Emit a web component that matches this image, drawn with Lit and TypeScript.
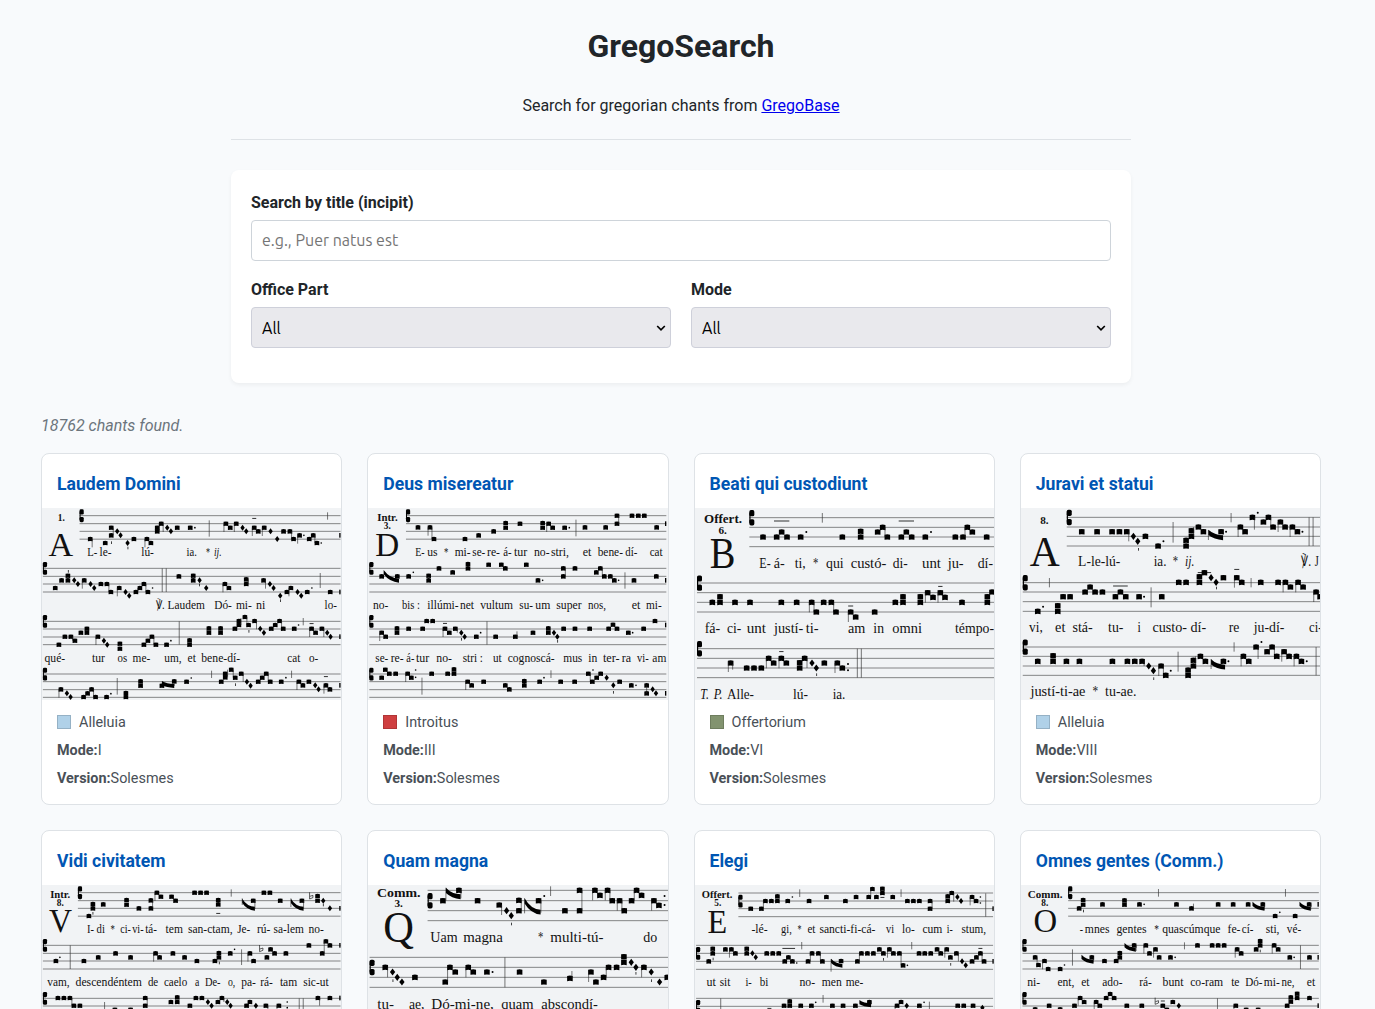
import { LitElement, html, svg, css } from "lit";
import { customElement, property } from "lit/decorators.js";

type Word = [number, number, string, string?];
interface Staff {
  x: number;
  lines: number[];
  clef: number;
  notes: string;
  base: number;
  words: Word[];
}
interface Chant {
  title: string;
  part: string;
  color: string;
  mode: string;
  x0: number;
  k: number;
  label: Word;
  labelY: number;
  num: number;
  numY: number;
  initial: [string, number, number, number, number];
  staves: Staff[];
}

const L1 = [203, 227, 250, 273.5];
const L2 = [361, 385, 408, 432];
const L3 = [520, 543, 567, 590];
const L4 = [678, 701, 725, 748];

/* Score notation. Bare "x,y" is a punctum; l/r add a left/right stem, d diamond,
   s stem, | bar, - episema, . mora, ' ictus, P oblique stroke, c custos, f flat. */
const chants: Chant[] = [
  {
    title: "Laudem Domini", part: "Alleluia", color: "#b0d1e8", mode: "I", x0: 18, k: 1,
    label: [0, 0, ""], labelY: 0, num: 76, numY: 218, initial: ["A", 38, 324, 74, 102],
    staves: [
      { x: 131, lines: L1, clef: 203, base: 325,
        notes: "r163,273 208,285 226,239 226,262 s232,239,262 '227,284 d244,250 d254,262 d275,285 '276,300 294,273 l333,273 345,285 364,250 364,239 s370,227,250 r376,227 d394,239 d405,250 424,239 463,239 .477,239 |520,217,266 l570,227 583,239 l601,227 d620,239 d631,250 l655,239 -655,211,12 667,250 l685,239 d704,250 d724,273 743,250 762,250 s767,250,273 773,273 l791,262 .804,262 820,273 832,262 s837,262,285 843,285 .856,285 |875,193,215 c912,262",
        words: [[154, 184, "L-"], [191, 227, "le-"], [316, 354, "lú-"], [452, 483, "ia."], [510, 522, "*"], [534, 557, "ij.", "i"]] },
      { x: 21, lines: L2, clef: 361, base: 483,
        notes: "58,420 77,397 96,397 96,383 '97,370 d115,397 d126,408 l145,397 d164,408 d175,420 195,408 213,408 s219,408,432 225,432 l250,420 d269,432 d280,443 300,432 s306,430,420 312,420 324,408 s330,408,432 336,432 .350,420 |379,361,432 |391,361,432 429,385 472,397 472,383 d491,397 '491,411 d511,420 l567,408 579,420 631,408 631,394 s637,394,408 r683,397 d702,408 d713,420 d733,443 '734,458 753,432 l765,420 d785,432 d796,443 814,432 .828,420 |853,375,420 883,432 c912,432",
        words: [[360, 386, "℣."], [395, 507, "Laudem"], [535, 588, "Dó-"], [600, 648, "mi-"], [660, 688, "ni"], [866, 903, "lo-"]] },
      { x: 21, lines: L3, clef: 520, base: 641,
        notes: "69,590 87,566 105,566 s110,566,578 117,578 135,554 153,554 153,542 l186,566 d204,578 d214,590 252,602 252,587 324,590 336,578 348,566 s354,566,590 360,590 392,590 .405,578 |430,520,590 461,590 461,577 519,554 519,541 554,554 554,541 597,542 609,531 609,519 s615,510,531 627,507 s633,507,531 638,531 '639,550 r656,519 d673,542 d684,554 706,542 718,531 731,519 s737,519,542 742,542 775,542 .788,531 |802,510,532 l827,542 -827,527,12 839,554 r858,542 d874,554 d884,566 c912,566",
        words: [[26, 88, "qué-"], [168, 207, "tur"], [245, 274, "os"], [290, 343, "me-"], [385, 437, "um,"], [455, 480, "et"], [496, 613, "bene-dí-"], [754, 793, "cat"], [819, 847, "o-"]] },
      { x: 21, lines: L4, clef: 678, base: 800,
        notes: "l75,724 d93,736 d104,747 143,747 155,736 167,724 s173,724,747 179,747 212,747 .225,737 |244,690,740 270,747 270,735 314,713 314,700 P378,706,415,713 378,713 s415,700,714 415,700 452,701 .466,690 |527,668,690 556,701 568,688 568,677 s575,665,688 586,665 s592,665,689 598,689 '599,710 r616,677 d633,701 d644,713 667,701 679,689 691,677 s697,677,701 703,701 736,701 .750,689 |767,668,690 l789,701 801,712 819,701 d838,712 d848,724 l870,712 -870,686,12 882,724 c912,712",
        words: [] },
    ],
  },
  {
    title: "Deus misereatur", part: "Introitus", color: "#cf3f40", mode: "III", x0: 18.75, k: 1,
    label: [47, 108, "Intr."], labelY: 219, num: 77, numY: 242, initial: ["D", 41, 324, 72, 102],
    staves: [
      { x: 133, lines: L1, clef: 203, base: 325,
        notes: "169,238 l205,238 s211,238,273 217,273 310,273 351,262 396,250 432,239 432,225 475,227 543,239 543,225 l561,227 573,239 609,239 .623,239 |643,215,265 670,238 732,238 766,227 766,203 s771,203,227 811,203 830,203 848,203 885,238 c912,227",
        words: [[161, 189, "E-"], [197, 228, "us"], [247, 260, "*"], [279, 327, "mi-"], [332, 371, "se-"], [376, 415, "re-"], [425, 450, "á-"], [457, 497, "tur"], [517, 564, "no-"], [568, 622, "stri,"], [663, 689, "et"], [708, 784, "bene-"], [791, 827, "dí-"], [864, 903, "cat"]] },
      { x: 23, lines: L2, clef: 361, base: 483,
        notes: "60,385 P66,373,112,397 107,385 141,385 .155,373 201,397 201,383 232,361 273,373 319,361 319,348 381,350 419,350 431,361 494,350 529,397 .543,397 605,385 605,361 s611,361,385 640,361 704,373 716,361 s722,361,385 728,385 746,385 758,397 .771,397 |790,373,422 817,397 884,385 c912,397",
        words: [[34, 80, "no-"], [121, 175, "bis :"], [197, 291, "illúmi-"], [295, 337, "net"], [356, 454, "vultum"], [473, 514, "su-"], [521, 566, "um"], [584, 660, "super"], [679, 733, "nos,"], [810, 836, "et"], [853, 900, "mi-"]] },
      { x: 23, lines: L3, clef: 520, base: 641,
        notes: "l60,554 72,566 106,554 106,541 141,542 183,542 195,519 213,519 l250,542 -250,526,12 263,554 281,542 s287,542,554 d299,554 '299,574 d309,566 344,566 .357,554 |376,520,590 402,566 461,566 s466,550,566 514,554 560,554 560,541 d577,554 d587,566 '588,580 606,542 640,542 684,542 741,542 754,530 766,542 800,554 .813,554 846,542 880,519 c912,531",
        words: [[41, 80, "se-"], [87, 126, "re-"], [134, 158, "á-"], [163, 203, "tur"], [224, 271, "no-"], [303, 364, "stri :"], [394, 420, "ut"], [438, 579, "cognoscá-"], [605, 662, "mus"], [680, 707, "in"], [724, 774, "ter-"], [780, 808, "ra"], [826, 861, "vi-"], [872, 914, "am"]] },
      { x: 23, lines: L4, clef: 678, base: 800,
        notes: "60,689 71,665 83,677 102,677 l138,677 149,689 .162,666 .162,688 |181,689,740 210,677 258,677 277,677 277,664 l318,701 330,712 366,701 431,712 443,724 488,712 488,699 534,701 .547,689 |568,667,690 597,701 639,701 r680,677 .694,666 692,701 705,689 717,677 d735,689 d755,712 '755,733 774,701 809,712 .823,712 855,736 855,712 s855,712,736 d873,724 d883,736 c912,736",
        words: [] },
    ],
  },
  {
    title: "Beati qui custodiunt", part: "Offertorium", color: "#82936f", mode: "VI", x0: 19.5, k: 1.2,
    label: [48, 162, "Offert."], labelY: 225, num: 104, numY: 257, initial: ["B", 65, 360, 77, 132],
    staves: [
      { x: 184, lines: [209, 238, 267, 296], clef: 209, base: 359,
        notes: "225,267 266,267 281,252 297,267 -281,219,46 338,267 .355,252 |403,195,224 463,267 518,267 518,250 569,252 584,238 598,267 s591,238,267 640,267 655,252 671,267 -655,219,46 712,267 .729,252 802,267 825,267 838,238 s831,238,267 853,252 896,267",
        words: [[214, 248, "E-"], [257, 290, "á-"], [320, 353, "ti,"], [375, 391, "*"], [414, 467, "qui"], [488, 595, "custó-"], [614, 659, "di-"], [702, 759, "unt"], [779, 827, "ju-"], [869, 915, "dí-"]] },
      { x: 27, lines: [405, 434, 463, 492], clef: 405, base: 556,
        notes: "73,463 96,463 96,446 141,463 186,463 280,463 326,463 l371,463 s378,463,492 385,492 407,463 430,463 s437,463,492 444,492 l488,492 -488,474,15 503,507 560,492 622,463 645,463 645,446 697,463 697,446 l719,434 735,448 l757,434 -757,415,13 771,448 822,463 898,463 898,446 912,432",
        words: [[50, 97, "fá-"], [117, 160, "ci-"], [176, 234, "unt"], [258, 346, "justí-"], [353, 392, "ti-"], [480, 532, "am"], [556, 588, "in"], [613, 702, "omni"], [801, 918, "témpo-"]] },
      { x: 27, lines: [602, 631, 660, 689], clef: 602, base: 752,
        notes: "128,645 s121,640,672 s134,648,665 176,660 198,660 220,660 l242,631 257,645 l280,631 -280,611,13 295,645 335,660 335,644 350,631 s357,631,660 d372,645 d385,660 '386,680 409,645 l448,645 463,660 .480,648 .480,667 |508,602,689 |520,602,689",
        words: [[37, 63, "T.", "i"], [77, 104, "P.", "i"], [117, 198, "Alle-"], [315, 360, "lú-"], [434, 472, "ia."]] },
    ],
  },
  {
    title: "Juravi et statui", part: "Alleluia", color: "#b0d1e8", mode: "VIII", x0: 20.25, k: 1.2,
    label: [0, 0, ""], labelY: 0, num: 92, numY: 227, initial: ["A", 48, 354, 90, 126],
    staves: [
      { x: 159, lines: [208, 237, 265, 294], clef: 208, base: 355,
        notes: "204,251 250,251 295,251 317,251 339,251 s345,251,280 d359,265 d372,280 '374,304 395,265 433,294 .449,280 |478,222,284 517,294 517,277 533,265 533,248 s539,237,265 554,237 569,251 s584,246,276 P584,254,628,268 622,251 .637,251 |652,195,223 l680,237 694,251 716,208 s722,208,245 .732,194 749,222 764,208 s771,208,237 778,237 l800,222 814,237 l836,237 851,251 .866,251 |886,208,294 |898,208,294",
        words: [[193, 320, "L-le-lú-"], [420, 458, "ia."], [477, 493, "*"], [514, 542, "ij.", "i"], [862, 892, "℣."], [903, 915, "J"]] },
      { x: 27, lines: [404, 432, 461, 490], clef: 404, base: 551,
        notes: "72,490 .88,476 |107,390,418 132,490 132,473 148,446 169,446 214,432 229,417 244,432 266,432 305,446 320,432 336,446 -320,414,44 376,446 .391,446 |412,418,478 444,446 495,403 517,403 557,403 557,386 572,374 -572,374,40 d592,389 d607,403 '608,420 629,389 l669,389 -669,364,15 684,403 |712,390,418 741,403 793,403 l815,403 830,417 l853,403 868,417 l907,432 919,446",
        words: [[46, 87, "vi,"], [124, 155, "et"], [176, 237, "stá-"], [283, 329, "tu-"], [371, 381, "i"], [416, 520, "custo-"], [530, 577, "dí-"], [645, 677, "re"], [720, 812, "ju-dí-"], [886, 926, "ci-"]] },
      { x: 27, lines: [597, 625, 654, 682], clef: 597, base: 744,
        notes: "72,640 118,640 118,623 158,640 197,640 296,640 341,640 363,640 385,640 s391,640,654 d405,654 d419,668 '420,692 l442,654 s449,654,682 456,682 .471,668 |493,611,671 523,682 523,666 539,654 539,637 s545,625,654 560,625 575,640 s592,633,663 P592,642,634,656 629,640 .644,640 |661,583,611 l689,625 705,640 727,597 s733,597,633 .743,582 760,611 775,597 s782,597,625 789,625 l811,611 826,625 l848,625 863,640 .879,640 |907,597,682",
        words: [[50, 215, "justí-ti-ae"], [236, 253, "*"], [274, 368, "tu-ae."]] },
    ],
  },
  {
    title: "Vidi civitatem", part: "Introitus", color: "#cf3f40", mode: "VIII", x0: 18, k: 1,
    label: [43, 103, "Intr."], labelY: 219, num: 73, numY: 242, initial: ["V", 39, 322, 69, 102],
    staves: [
      { x: 126, lines: L1, clef: 203, base: 325,
        notes: "159,273 171,250 171,237 '171,265 202,238 272,239 272,225 309,250 345,250 345,226 s350,226,250 l363,203 375,215 407,215 419,227 476,203 494,203 512,203 547,238 547,225 -547,265,12 |586,193,215 s619,220,240 P619,228,657,250 652,227 s657,227,252 684,203 702,203 733,227 s765,220,246 P765,228,803,250 798,227 s803,227,252 f826,215 845,227 845,213 d862,227 '862,240 d882,250 c912,250",
        words: [[153, 174, "I-"], [182, 207, "di"], [224, 237, "*"], [253, 285, "ci-"], [289, 323, "vi-"], [328, 363, "tá-"], [389, 441, "tem"], [456, 590, "san-ctam,"], [604, 643, "Je-"], [663, 703, "rú-"], [713, 804, "sa-lem"], [818, 864, "no-"]] },
      { x: 21, lines: L2, clef: 361, base: 483,
        notes: "60,408 .72,397 |103,361,432 144,408 187,397 239,385 284,397 l359,385 371,397 411,385 446,397 483,408 537,408 549,397 549,384 '550,414 583,385 .596,373 |617,373,420 l642,385 653,408 f676,373 693,397 704,373 716,385 750,385 819,361 859,385 870,349 s865,349,385 882,361 c912,361",
        words: [[34, 101, "vam,"], [119, 318, "descendéntem"], [336, 367, "de"], [384, 454, "caelo"], [477, 490, "a"], [507, 554, "De-"], [576, 598, "o,"], [616, 660, "pa-"], [673, 711, "rá-"], [732, 784, "tam"], [802, 878, "sic-ut"]] },
      { x: 21, lines: L3, clef: 520, base: 641,
        notes: "66,519 84,519 102,519 s108,519,542 114,542 132,542 |206,531,590 237,554 284,554 328,542 328,519 s334,519,542 405,531 424,531 424,517 462,542 480,519 498,519 d516,531 d527,542 546,531 558,519 s564,519,531 d574,531 d584,542 632,542 642,531 d660,542 r690,542 l729,542 .754,531 .754,548 |790,520,590 |802,520,590 846,519 s851,519,542 882,519 c912,519",
        words: [] },
    ],
  },
  {
    title: "Quam magna", part: "Communio", color: "#b68bb5", mode: "III", x0: 18.75, k: 1.2,
    label: [47, 178, "Comm."], labelY: 216, num: 112, numY: 246, initial: ["Q", 66, 350, 92, 135],
    staves: [
      { x: 199, lines: [196, 227, 257, 287], clef: 227, base: 350,
        notes: "245,227 s254,188,227 P254,197,298,214 293,196 s299,196,220 349,227 414,240 s421,240,270 d436,257 d450,272 '451,297 473,257 473,226 s480,226,257 s490,220,265 P490,228,538,260 532,227 s539,227,263 .549,213 |568,184,213 611,257 655,257 655,196 s662,196,257 l701,196 716,211 l739,196 s746,196,227 753,227 l775,227 s782,227,257 789,257 811,227 826,196 s819,196,227 841,211 l878,227 893,241 .910,213 .910,240",
        words: [[207, 289, "Uam"], [306, 425, "magna"], [530, 546, "*"], [567, 727, "multi-tú-"], [846, 888, "do"]] },
      { x: 25, lines: [397, 427, 457, 487], clef: 427, base: 551,
        notes: "r72,427 d94,441 '95,467 d108,457 d122,471 161,457 252,471 266,427 s259,427,471 282,441 l321,427 336,441 377,441 .394,441 |431,397,487 475,441 548,471 626,460 s632,438,460 l689,441 704,471 727,457 742,427 s735,427,457 766,427 788,412 788,395 d810,412 d824,427 '824,445 l848,427 d870,441 '871,467 d895,471 918,457",
        words: [[48, 98, "tu-"], [143, 190, "ae,"], [210, 398, "Dó-mi-ne,"], [420, 517, "quam"], [540, 710, "abscondí-"]] },
    ],
  },
  {
    title: "Elegi", part: "Offertorium", color: "#82936f", mode: "V", x0: 19.5, k: 1,
    label: [40, 132, "Offert."], labelY: 220, num: 88, numY: 243, initial: ["E", 57, 324, 59, 102],
    staves: [
      { x: 150, lines: [204, 228, 251, 275], clef: 228, base: 325,
        notes: "187,251 219,251 231,228 s225,228,251 249,228 267,228 267,214 298,228 .312,216 |334,193,216 362,228 414,216 471,228 503,216 541,216 552,192 s547,192,216 564,216 582,204 582,191 -582,217,12 613,216 |638,193,216 657,228 675,228 693,228 725,251 725,228 s731,228,251 778,228 778,214 790,204 s796,204,230 d807,216 d818,228 l851,216 863,228 .876,216 .876,234 |892,205,275 c914,251",
        words: [[189, 238, "-lé-"], [278, 310, "gi,"], [327, 339, "*"], [357, 381, "et"], [393, 561, "sancti-fi-cá-"], [593, 617, "vi"], [641, 679, "lo-"], [702, 762, "cum"], [775, 793, "i-"], [819, 893, "stum,"]] },
      { x: 23, lines: [361, 385, 409, 433], clef: 385, base: 484,
        notes: "61,409 73,385 73,371 '74,402 111,373 l129,373 141,385 175,385 175,371 d192,385 d202,397 235,385 253,385 271,385 289,409 300,397 312,409 -301,370,38 .325,414 |340,351,373 359,409 371,385 s366,385,409 390,385 s396,385,409 402,409 s428,402,440 P428,408,462,421 458,408 507,409 519,385 s513,385,409 537,385 555,385 573,373 585,385 '585,403 l603,373 615,385 633,385 s638,385,421 644,421 .657,421 |670,351,373 692,385 709,385 727,385 746,373 757,385 l775,373 786,397 '787,418 804,385 s810,385,409 d821,409 d832,421 851,409 864,397 876,385 s881,385,409 -876,370,12 887,409 c914,409",
        words: [[54, 82, "ut"], [94, 126, "sit"], [171, 190, "i-"], [214, 240, "bi"], [333, 380, "no-"], [400, 460, "men"], [472, 525, "me-"]] },
      { x: 23, lines: [520, 544, 567, 591], clef: 544, base: 641,
        notes: "|97,520,590 -243,550,12 287,542 304,542 304,529 337,542 369,542 .382,532 |404,510,533 432,542 464,542 501,542 P513,532,548,540 543,531 l626,542 638,531 d655,542 693,542 .707,532 |723,530,590 808,542 826,542 854,542 d882,548",
        words: [] },
    ],
  },
  {
    title: "Omnes gentes (Comm.)", part: "Communio", color: "#b68bb5", mode: "VIII", x0: 20.25, k: 1,
    label: [41, 145, "Comm."], labelY: 219, num: 92, numY: 242, initial: ["O", 58, 322, 71, 102],
    staves: [
      { x: 162, lines: L1, clef: 203, base: 325,
        notes: "195,250 207,239 207,225 '208,258 265,238 331,239 331,226 376,238 .390,238 |433,192,215 487,238 532,250 s538,236,250 612,238 657,238 702,238 P715,237,751,250 746,238 s751,238,254 783,273 .797,262 |814,192,215 843,273 P856,237,890,250 885,238 s890,238,254 c912,238",
        words: [[197, 207, "-"], [212, 286, "mnes"], [307, 397, "gentes"], [420, 434, "*"], [444, 619, "quascúmque"], [640, 679, "fe-"], [683, 718, "cí-"], [755, 796, "sti,"], [818, 861, "vé-"]] },
      { x: 25, lines: L2, clef: 361, base: 483,
        notes: "r63,397 73,420 l91,408 102,432 138,432 .151,420 |175,373,422 P202,396,238,409 233,397 s238,397,412 271,408 306,408 317,397 317,384 P331,361,365,373 360,361 s366,361,378 l395,361 406,385 l424,373 435,397 469,397 .483,397 |511,352,373 550,361 594,361 612,361 630,361 l669,373 681,385 726,373 738,361 738,348 '738,378 l780,361 792,373 827,397 .840,397 |859,361,432 886,397 c912,397",
        words: [[39, 78, "ni-"], [130, 181, "ent,"], [201, 226, "et"], [264, 325, "ado-"], [375, 413, "rá-"], [445, 508, "bunt"], [528, 627, "co-ram"], [651, 676, "te"], [693, 745, "Dó-"], [749, 797, "mi-"], [802, 841, "ne,"], [878, 903, "et"]] },
      { x: 25, lines: L3, clef: 520, base: 641,
        notes: "63,553 105,542 138,553 181,542 198,519 s192,519,542 210,531 l246,531 257,542 276,519 288,507 300,519 338,542 383,542 f428,531 -446,528,12 446,542 458,554 476,531 d494,542 |610,520,590 l665,542 696,554 732,554 819,542 830,530 830,517 849,519 849,506 886,519 c912,542",
        words: [] },
    ],
  },
];

const MODE_NUMBERS: Record<string, number> = { I: 1, III: 3, V: 5, VI: 6, VIII: 8 };

@customElement("chant-score")
class ChantScore extends LitElement {
  @property({ attribute: false }) chant!: Chant;

  static styles = css`
    :host { display: block; height: 192px; background: #f1f3f5; overflow: hidden; }
    svg { display: block; width: 100%; height: 192px; }
    .line { stroke: #303030; stroke-width: 1.7; }
    .stem { stroke: #222; stroke-width: 1.8; }
    .bar { stroke: #333; stroke-width: 2; }
    .stroke { stroke: #111; stroke-width: 2; fill: none; }
    text { font-family: "Liberation Serif", "DejaVu Serif", serif; fill: #111; }
    .i { font-style: italic; }
    .b { font-weight: bold; }
    .mid { text-anchor: middle; }
  `;

  private punctum(x: number, y: number) {
    const k = this.chant.k, w = 7 * k, h = 7 * k;
    return svg`<path d=${`M${x - w} ${y - h + 1.5}Q${x} ${y - h - 1} ${x + w} ${y - h + 1.5}V${y + h}Q${x} ${y + h - 1.6} ${x - w} ${y + h}Z`} />`;
  }

  private stem(x: number, a: number, b: number) {
    return svg`<line class="stem" x1=${x} x2=${x} y1=${a} y2=${b} />`;
  }

  private glyph(token: string) {
    const k = this.chant.k;
    const kind = /^[\d]/.test(token) ? "n" : token[0];
    const [x, y, a = 0, b = 0] = (kind === "n" ? token : token.slice(1)).split(",").map(Number);
    switch (kind) {
      case "l": return svg`${this.punctum(x, y)}${this.stem(x - 5.8 * k, y, y + 25 * k)}`;
      case "r": return svg`${this.punctum(x, y)}${this.stem(x + 5.8 * k, y, y + 25 * k)}`;
      case "d": return svg`<path d=${`M${x} ${y - 9 * k}L${x + 6.6 * k} ${y}L${x} ${y + 9 * k}L${x - 6.6 * k} ${y}Z`} />`;
      case "s": return this.stem(x, y, a);
      case "|": return svg`<line class="bar" x1=${x} x2=${x} y1=${y} y2=${a} />`;
      case "-": return svg`<rect x=${x - a / 2} y=${y - 1.2} width=${a} height="2.4" />`;
      case ".": return svg`<circle cx=${x} cy=${y} r=${2.5 * k} />`;
      case "'": return svg`<rect x=${x - 1} y=${y - 4} width="2.2" height="8" />`;
      case "c": return svg`<rect x=${x - 2} y=${y - 7} width="4" height="14" />`;
      case "f": return svg`<path class="stroke" d=${`M${x - 5} ${y - 13}V${y + 7}L${x + 5} ${y + 3}V${y - 4}L${x - 4} ${y - 1}`} />`;
      case "P": return svg`<path d=${`M${x} ${y - 7 * k}Q${(x + a) / 2 - 4} ${b - 5 * k} ${a} ${b - 5 * k}V${b + 7 * k}Q${(x + a) / 2 - 5} ${b + 5 * k} ${x} ${y + 6 * k}Z`} />`;
      default: return this.punctum(x, y);
    }
  }

  private clef(x: number, y: number) {
    const k = this.chant.k, w = 12.5 * k;
    const blob = (top: number) => svg`<rect x=${x} y=${top} width=${w} height=${15.5 * k} rx=${4 * k} />`;
    return svg`${blob(y - 19 * k)}${blob(y + 4 * k)}<rect x=${x} y=${y - 13 * k} width=${3 * k} height=${26 * k} />`;
  }

  private staff(s: Staff) {
    const size = 37 * this.chant.k;
    return svg`
      ${s.lines.map((y) => svg`<line class="line" x1=${s.x} x2=${this.chant.k > 1 ? 922 : 914} y1=${y} y2=${y} />`)}
      ${this.clef(s.x, s.clef)}
      ${s.notes.split(" ").map((t) => this.glyph(t))}
      ${s.words.map(([a, b, t, c]) => svg`<text class=${c ?? ""} x=${a} y=${s.base} font-size=${size} textLength=${b - a} lengthAdjust="spacingAndGlyphs">${t}</text>`)}
    `;
  }

  render() {
    const c = this.chant;
    const [a, b, label] = c.label;
    const [ch, ix, iy, iw, is] = c.initial;
    return html`<svg viewBox=${`${c.x0 + (c.k > 1 ? 1.5 : 0.3)} 180 897.75 576`} preserveAspectRatio="none">
      ${label ? svg`<text class="b" x=${a} y=${c.labelY} font-size=${30 * c.k} textLength=${b - a} lengthAdjust="spacingAndGlyphs">${label}</text>` : null}
      <text class="b mid" x=${c.num} y=${c.numY} font-size=${28 * c.k}>${MODE_NUMBERS[c.mode]}.</text>
      <text x=${ix} y=${iy} font-size=${is} textLength=${iw} lengthAdjust="spacingAndGlyphs">${ch}</text>
      ${c.staves.map((s) => this.staff(s))}
    </svg>`;
  }
}

@customElement("chant-card")
class ChantCard extends LitElement {
  @property({ attribute: false }) chant!: Chant;

  static styles = css`
    :host {
      display: block; box-sizing: border-box; background: #fff; overflow: hidden;
      border: 1px solid #dee2e6; border-radius: 8px; height: 351.9px;
    }
    h3 { margin: 0; padding: 15.5px 15px 10px; font-size: 17.6px; line-height: 28.6px; font-weight: 700; color: #0056b3; }
    .meta { padding: 10.4px 15px 15px; display: flex; flex-direction: column; gap: 5px; font-size: 14.4px; line-height: 23px; color: #495057; }
    .part { display: flex; align-items: center; gap: 8px; }
    .swatch { width: 14px; height: 14px; box-sizing: border-box; border: 1px solid rgba(0, 0, 0, 0.15); }
  `;

  render() {
    const c = this.chant;
    return html`
      <h3>${c.title}</h3>
      <chant-score .chant=${c}></chant-score>
      <div class="meta">
        <div class="part"><span class="swatch" style=${`background-color:${c.color}`}></span><span>${c.part}</span></div>
        <div><b>Mode:</b>${c.mode}</div>
        <div><b>Version:</b>Solesmes</div>
      </div>
    `;
  }
}

@customElement("app-root")
class AppRoot extends LitElement {
  static styles = css`
    :host {
      display: block; box-sizing: border-box; height: 1009px; overflow: hidden;
      padding: 21px 54px 0 41px; background: #f8fafc; color: #212529;
      font: 16px/25.6px Roboto, "Liberation Sans", sans-serif;
    }
    header { width: 900px; margin: 0 auto 30px; padding-bottom: 20px; border-bottom: 1px solid #dee2e6; text-align: center; }
    h1 { margin: 0 0 21px; font-size: 32px; line-height: 51.2px; font-weight: 700; }
    p { margin: 0; }
    a { color: #0000ee; }
    .search { box-sizing: border-box; width: 900px; margin: 0 auto 30px; padding: 20px; border-radius: 8px; background: #fff; box-shadow: 0 2px 4px rgba(0, 0, 0, 0.05); }
    .group { margin-bottom: 15px; flex: 1; }
    .row { display: flex; gap: 20px; }
    label { display: block; margin-bottom: 5px; font-weight: 700; }
    .row label { padding-top: 0.7px; margin-bottom: 4.5px; }
    input, .select {
      display: flex; box-sizing: border-box; width: 100%; height: 41px; padding: 0 10px; align-items: center;
      border: 1px solid #ced4da; border-radius: 4px; background: #fff; color: #000;
      font: 400 16px/20px Ubuntu, "Noto Sans", sans-serif;
    }
    input { padding-bottom: 2px; }
    input::placeholder { color: #757575; }
    .select { justify-content: space-between; background: #e9e9ed; border-color: #ced0da; padding-right: 4px; }
    .select svg { width: 10px; height: 8px; margin-top: 1px; fill: none; stroke: #000; stroke-width: 1.7; }
    .count { margin-bottom: 14.4px; color: #6c757d; font-style: italic; }
    .grid { display: grid; grid-template-columns: repeat(4, 1fr); gap: 25px; }
  `;

  private select(label: string) {
    return html`<div class="group"><label>${label}</label>
      <div class="select" role="combobox" tabindex="0"><span>All</span><svg viewBox="0 0 10 8"><path d="M1.2 2L5 5.8L8.8 2" /></svg></div>
    </div>`;
  }

  render() {
    return html`
      <header>
        <h1>GregoSearch</h1>
        <p>Search for gregorian chants from <a href="#">GregoBase</a></p>
      </header>
      <section class="search">
        <div class="group"><label for="q">Search by title (incipit)</label><input id="q" placeholder="e.g., Puer natus est" /></div>
        <div class="row">${this.select("Office Part")}${this.select("Mode")}</div>
      </section>
      <div class="count">18762 chants found.</div>
      <main class="grid">${chants.map((c) => html`<chant-card .chant=${c}></chant-card>`)}</main>
    `;
  }
}
